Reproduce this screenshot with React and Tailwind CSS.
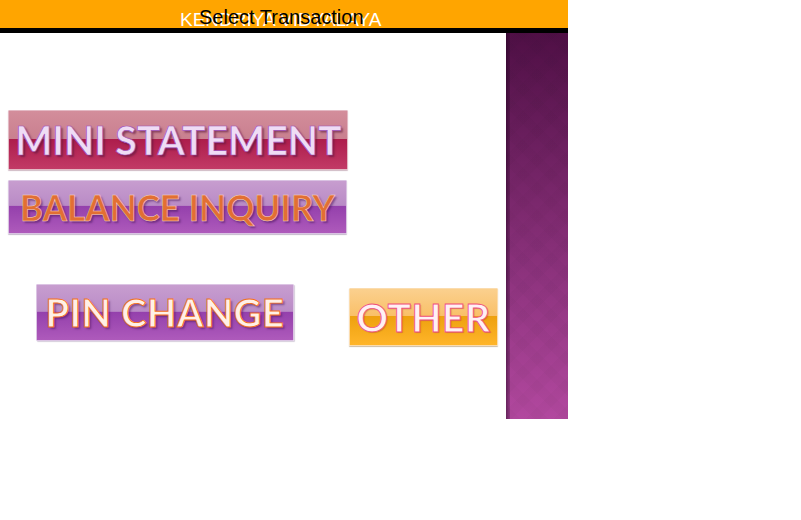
export default function App() {
  return (
    <div className="w-[568px] font-['Liberation_Sans',sans-serif]">
      <header className="relative h-[33px] bg-[#ffa500] border-b-[5px] border-black overflow-hidden">
        <span className="absolute left-[180px] top-[9px] text-[19px] leading-[22px] text-white whitespace-nowrap">KENDRIYA VIDYALAYA</span>
        <span className="absolute left-[199px] top-[6px] text-[20px] leading-[23px] text-black whitespace-nowrap">Select Transaction</span>
      </header>
      <div className="flex h-[386px]">
        <main className="w-[506px] flex flex-col pt-[77px]">
          <div className="ml-2 w-[340px] h-[60px] flex items-center justify-center whitespace-nowrap rounded-[1px] border border-[#e3b9c4] shadow-[0_1px_1px_rgba(120,60,90,0.35)] bg-[linear-gradient(#d38d9b_0%,#c9808f_48%,#ad1d4c_49%,#c23a66_100%)] font-['Lato',sans-serif] font-bold text-[40px] text-[#efdcf5] [-webkit-text-stroke:0.7px_#a050b8] [text-shadow:2px_2px_2px_rgba(90,20,60,0.6)]"><span className="inline-block scale-x-[0.98]">MINI STATEMENT</span></div>
          <div className="ml-2 mt-[10px] w-[339px] h-[54px] flex items-center justify-center whitespace-nowrap rounded-[1px] border border-[#d9c2e2] shadow-[0_1px_1px_rgba(90,60,110,0.35)] bg-[linear-gradient(#c79dcf_0%,#b98bc6_47%,#9440ac_48%,#ae5abb_100%)] font-['Lato',sans-serif] font-bold text-[37px] tracking-[0.2px] text-[#e26f33] [-webkit-text-stroke:0.5px_#f6d8c6] [text-shadow:2px_2px_2px_rgba(70,20,90,0.5)]"><span className="inline-block scale-x-[0.94]">BALANCE INQUIRY</span></div>
          <div className="flex items-start mt-[50px] pl-9">
            <div className="w-[258px] h-[57px] flex items-center justify-center whitespace-nowrap rounded-[1px] border border-[#dcc4e4] shadow-[1px_1px_1px_rgba(90,60,110,0.25)] bg-[linear-gradient(#c79dcf_0%,#ba8cc7_48%,#9440ac_49%,#ae5abb_100%)] font-['Lato',sans-serif] font-bold text-[38px] tracking-[0.6px] text-[#fff0e6] [-webkit-text-stroke:0.9px_#f2701c] [text-shadow:2px_2px_2px_rgba(70,20,90,0.5)]">PIN CHANGE</div>
            <div className="ml-[55px] mt-1 w-[149px] h-[58px] flex items-center justify-center whitespace-nowrap rounded-[1px] border border-[#fbdcae] shadow-[0_1px_1px_rgba(130,90,30,0.4)] bg-[linear-gradient(#fbd08e_0%,#f9c069_48%,#eea10f_49%,#ffb52a_100%)] font-['Lato',sans-serif] font-bold text-[39px] tracking-[0.5px] text-[#fff0f4] [-webkit-text-stroke:0.9px_#f0507c] [text-shadow:1px_1px_1px_rgba(150,70,40,0.4)]">OTHER</div>
          </div>
        </main>
        <aside className="relative w-[62px] bg-[linear-gradient(#4f0f45,#b2489f)]">
          <div className="absolute inset-0 bg-[repeating-linear-gradient(45deg,rgba(0,0,0,0.02)_0_10px,transparent_10px_20px),repeating-linear-gradient(-45deg,rgba(0,0,0,0.02)_0_10px,transparent_10px_20px)]" />
          <div className="absolute inset-y-0 left-0 w-1 bg-[linear-gradient(90deg,rgba(30,0,30,0.5),rgba(30,0,30,0.2))]" />
        </aside>
      </div>
    </div>
  );
}
